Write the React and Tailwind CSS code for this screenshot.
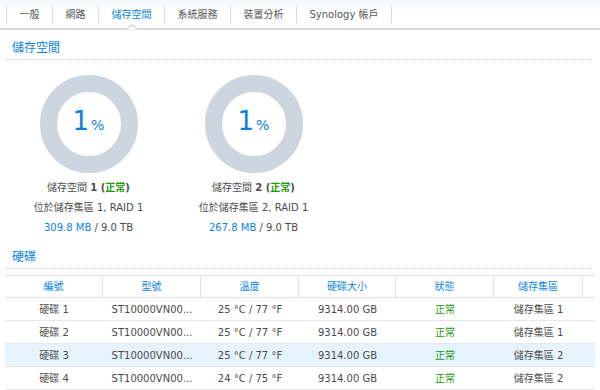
import React from 'react';

const tabs = ['一般', '網路', '儲存空間', '系統服務', '裝置分析', 'Synology 帳戶'];

const volumes = [
    { id: 1, pool: 1, used: '309.8 MB' },
    { id: 2, pool: 2, used: '267.8 MB' },
];

const disks = [
    { name: '硬碟 1', temp: '25 °C / 77 °F', pool: '儲存集區 1' },
    { name: '硬碟 2', temp: '25 °C / 77 °F', pool: '儲存集區 1' },
    { name: '硬碟 3', temp: '25 °C / 77 °F', pool: '儲存集區 2', selected: true },
    { name: '硬碟 4', temp: '24 °C / 75 °F', pool: '儲存集區 2' },
];

const headers = ['編號', '型號', '溫度', '硬碟大小', '狀態', '儲存集區'];

const Dotted = () => (
    <div className="h-px bg-[linear-gradient(to_right,#cbd4de_2px,transparent_2px)] bg-[length:4px_1px] bg-repeat-x"></div>
);

const SectionTitle = ({ children }) => (
    <div className="mx-[6px]">
        <div className="pl-[6px] pb-[3px] text-[12px] leading-[16px] text-[#0a84e0]">{children}</div>
        <Dotted />
    </div>
);

const App = () => {
    return (
        <div className="h-[390px] w-[600px] overflow-hidden bg-white font-['DejaVu_Sans','Noto_Sans_CJK_TC',sans-serif] text-[#4b4b4b]">
            {/* Tab bar */}
            <div className="h-[30px] border-b-2 border-[#d9d9d9] bg-gradient-to-b from-[#f2f7fc] to-white to-40% pl-[6px] flex items-center">
                <div className="w-px h-[19px] bg-[#d5dde6]"></div>
                {tabs.map((t, i) => (
                    <React.Fragment key={t}>
                        <div className={`relative h-full flex items-center px-[12.5px] text-[10px] whitespace-nowrap ${i === 2 ? 'text-[#0a84e0]' : 'text-[#555]'}`}>
                            {t}
                            {i === 2 && (
                                <svg className="absolute left-1/2 -translate-x-1/2 -bottom-[2px]" width="12" height="6" viewBox="0 0 12 6">
                                    <polygon points="0,5.6 6,0.6 12,5.6" fill="#ffffff" />
                                    <polyline points="0,5.2 6,0.8 12,5.2" fill="none" stroke="#d9d9d9" strokeWidth="1.3" />
                                </svg>
                            )}
                        </div>
                        <div className="w-px h-[19px] bg-[#d5dde6]"></div>
                    </React.Fragment>
                ))}
            </div>

            {/* Volumes */}
            <div className="mt-[10px]">
                <SectionTitle>儲存空間</SectionTitle>
            </div>
            <div className="flex pl-[6px] mt-[15px]">
                {volumes.map(v => (
                    <div key={v.id} className="w-[165px] flex flex-col items-center">
                        <div className="w-[98px] h-[98px] rounded-full border-[17px] border-[#cdd6df] flex items-baseline justify-center pt-[14px]">
                            <span className="text-[#0a7fdc] text-[26px] leading-[30px]">1</span>
                            <span className="text-[#0a7fdc] text-[14px] ml-[2px]">%</span>
                        </div>
                        <div className="mt-[5px] text-[10px] leading-[20px] text-center">
                            <div>
                                儲存空間 <b>{v.id} (</b><b className="text-[#1e9a0a]">正常</b><b>)</b>
                            </div>
                            <div>位於儲存集區 {v.pool}, RAID 1</div>
                            <div>
                                <span className="text-[#0a84e0]">{v.used}</span> / 9.0 TB
                            </div>
                        </div>
                    </div>
                ))}
            </div>

            {/* Disks */}
            <div className="mt-[11px]">
                <SectionTitle>硬碟</SectionTitle>
            </div>
            <div className="mt-[6px] ml-[5px] mr-[5px] text-[10px]">
                <div className="grid grid-cols-[98px_98px_98px_97px_98px_89px_1fr] h-[23px] border-y border-[#dde4eb] text-[#0a84e0]">
                    {headers.map(h => (
                        <div key={h} className="flex items-center justify-center border-r border-[#dde4eb]">{h}</div>
                    ))}
                    <div></div>
                </div>
                {disks.map(d => (
                    <div key={d.name} className={`grid grid-cols-[98px_98px_98px_97px_98px_89px_1fr] h-[23px] border-b border-[#e3e8ed] ${d.selected ? 'bg-[#e6f3fd]' : ''}`}>
                        <div className="flex items-center justify-center">{d.name}</div>
                        <div className="flex items-center justify-center">ST10000VN00...</div>
                        <div className="flex items-center justify-center">{d.temp}</div>
                        <div className="flex items-center justify-center">9314.00 GB</div>
                        <div className="flex items-center justify-center text-[#1e9a0a]">正常</div>
                        <div className="flex items-center justify-center">{d.pool}</div>
                        <div></div>
                    </div>
                ))}
            </div>
        </div>
    );
};

export default App;
